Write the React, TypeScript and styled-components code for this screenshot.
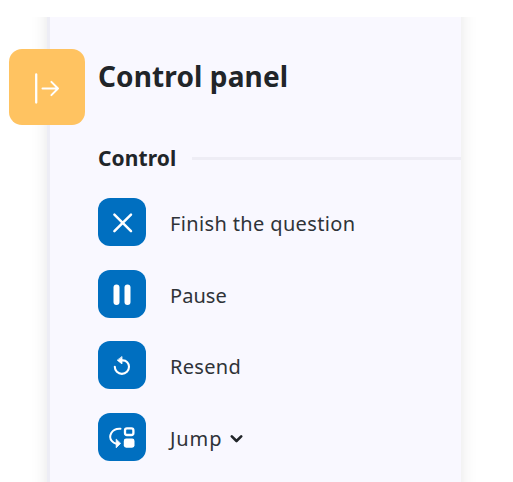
import React from "react";
import styled, { createGlobalStyle } from "styled-components";

const GlobalStyle = createGlobalStyle`
  * { box-sizing: border-box; }
  body { margin: 0; background: #fff; overflow: hidden; }
`;

const Page = styled.div`
  height: 482px;
  margin-top: 17px;
  padding-left: 47px;
  overflow: hidden;
  font-family: "Noto Sans", "Open Sans", sans-serif;
  color: #212529;
`;

const Panel = styled.aside`
  position: relative;
  width: 414px;
  height: 520px;
  margin-top: -30px;
  padding: 71px 0 0 48px;
  background: #f9f8ff;
  border-left: 3px solid #ededf5;
  box-shadow: 0 0 16px rgba(0, 0, 0, 0.1);
`;

const Toggle = styled.button`
  position: absolute;
  top: 61.5px;
  left: -41px;
  width: 76px;
  height: 76px;
  padding: 0;
  border: 0;
  border-radius: 13px;
  background: #ffc361;

  svg { display: block; }
`;

const Title = styled.h1`
  margin: 0;
  height: 36px;
  font-size: 28px;
  line-height: 36px;
  font-weight: 700;
  letter-spacing: 0.12px;
  white-space: nowrap;
`;

const SectionHeader = styled.div`
  display: flex;
  align-items: center;
  gap: 16px;
  height: 28px;
  margin-top: 50px;
`;

const SectionTitle = styled.h2`
  width: 78px;
  margin: 0;
  font-size: 21px;
  line-height: 28px;
  font-weight: 700;
  letter-spacing: 0.1px;
  white-space: nowrap;
`;

const Rule = styled.div`
  flex: 1;
  height: 3px;
  background: #eeedf5;
`;

const Actions = styled.div`
  display: flex;
  flex-direction: column;
  gap: 23.7px;
  margin-top: 26px;
`;

const Action = styled.div`
  display: flex;
  align-items: center;
  gap: 24px;
  height: 48px;
`;

const ActionButton = styled.button`
  width: 48px;
  height: 48px;
  padding: 0;
  border: 0;
  border-radius: 12px;
  background: #006fc0;

  svg { display: block; }
`;

const Label = styled.span<{ $spacing: number }>`
  display: flex;
  align-items: center;
  gap: 7.5px;
  padding-top: 4px;
  font-size: 20px;
  line-height: 28px;
  color: #2f3338;
  letter-spacing: ${(p) => p.$spacing}px;
  white-space: nowrap;
`;

const CloseIcon = () => (
  <svg width="48" height="48" fill="none" stroke="#fff" strokeWidth="2.5" strokeLinecap="round">
    <path d="M16.4 16.6 33 33.2M33 16.6 16.4 33.2" />
  </svg>
);

const PauseIcon = () => (
  <svg width="48" height="48" fill="#fff">
    <rect x="15.5" y="14.5" width="6" height="20.5" rx="3" />
    <rect x="26.5" y="14.5" width="6" height="20.5" rx="3" />
  </svg>
);

const ResendIcon = () => (
  <svg width="48" height="48" fill="none" stroke="#fff" strokeWidth="2.1" strokeLinecap="round" strokeLinejoin="round">
    <path d="M24.3 19.4C28.5 19.2 31 22.2 31 25.8A7.1 7.1 0 0 1 16.8 25.8" />
    <path d="M24 15.9V22.9L19.5 19.4Z" fill="#fff" strokeWidth="0.8" />
  </svg>
);

const JumpIcon = () => (
  <svg width="48" height="48" fill="none" stroke="#fff" strokeWidth="2" strokeLinecap="round" strokeLinejoin="round">
    <path d="M22.5 15.7C13.5 15 9.8 23.5 14 28.2Q15.6 30.1 18.3 30.8" />
    <path d="M18.2 26.5V34.8L22.4 30.6Z" fill="#fff" strokeWidth="0.8" />
    <rect x="27" y="15.4" width="8.4" height="6.6" rx="2" strokeWidth="2.3" />
    <rect x="25.8" y="25.5" width="10.7" height="9.2" rx="2.4" fill="#fff" stroke="none" />
  </svg>
);

const ExpandIcon = () => (
  <svg width="76" height="76" fill="none" stroke="#fff" strokeWidth="2" strokeLinecap="round" strokeLinejoin="round">
    <path d="M27.2 25.5V53.5" strokeWidth="2.3" />
    <path d="M33.5 39.5H49M42.4 32.9 49 39.5 42.4 46.1" />
  </svg>
);

const Chevron = () => (
  <svg width="13" height="10" fill="none" stroke="#212529" strokeWidth="2.6" strokeLinecap="round" strokeLinejoin="round">
    <path d="M1.8 2.3 6.5 7 11.2 2.3" />
  </svg>
);

export default function App() {
  return (
    <>
      <GlobalStyle />
      <Page>
        <Panel>
          <Toggle aria-label="Collapse panel"><ExpandIcon /></Toggle>
          <Title>Control panel</Title>
          <SectionHeader>
            <SectionTitle>Control</SectionTitle>
            <Rule />
          </SectionHeader>
          <Actions>
            <Action>
              <ActionButton aria-label="Finish"><CloseIcon /></ActionButton>
              <Label $spacing={0.36}>Finish the question</Label>
            </Action>
            <Action>
              <ActionButton aria-label="Pause"><PauseIcon /></ActionButton>
              <Label $spacing={0.05}>Pause</Label>
            </Action>
            <Action>
              <ActionButton aria-label="Resend"><ResendIcon /></ActionButton>
              <Label $spacing={0.3}>Resend</Label>
            </Action>
            <Action>
              <ActionButton aria-label="Jump"><JumpIcon /></ActionButton>
              <Label $spacing={0.9}>Jump <Chevron /></Label>
            </Action>
          </Actions>
        </Panel>
      </Page>
    </>
  );
}
